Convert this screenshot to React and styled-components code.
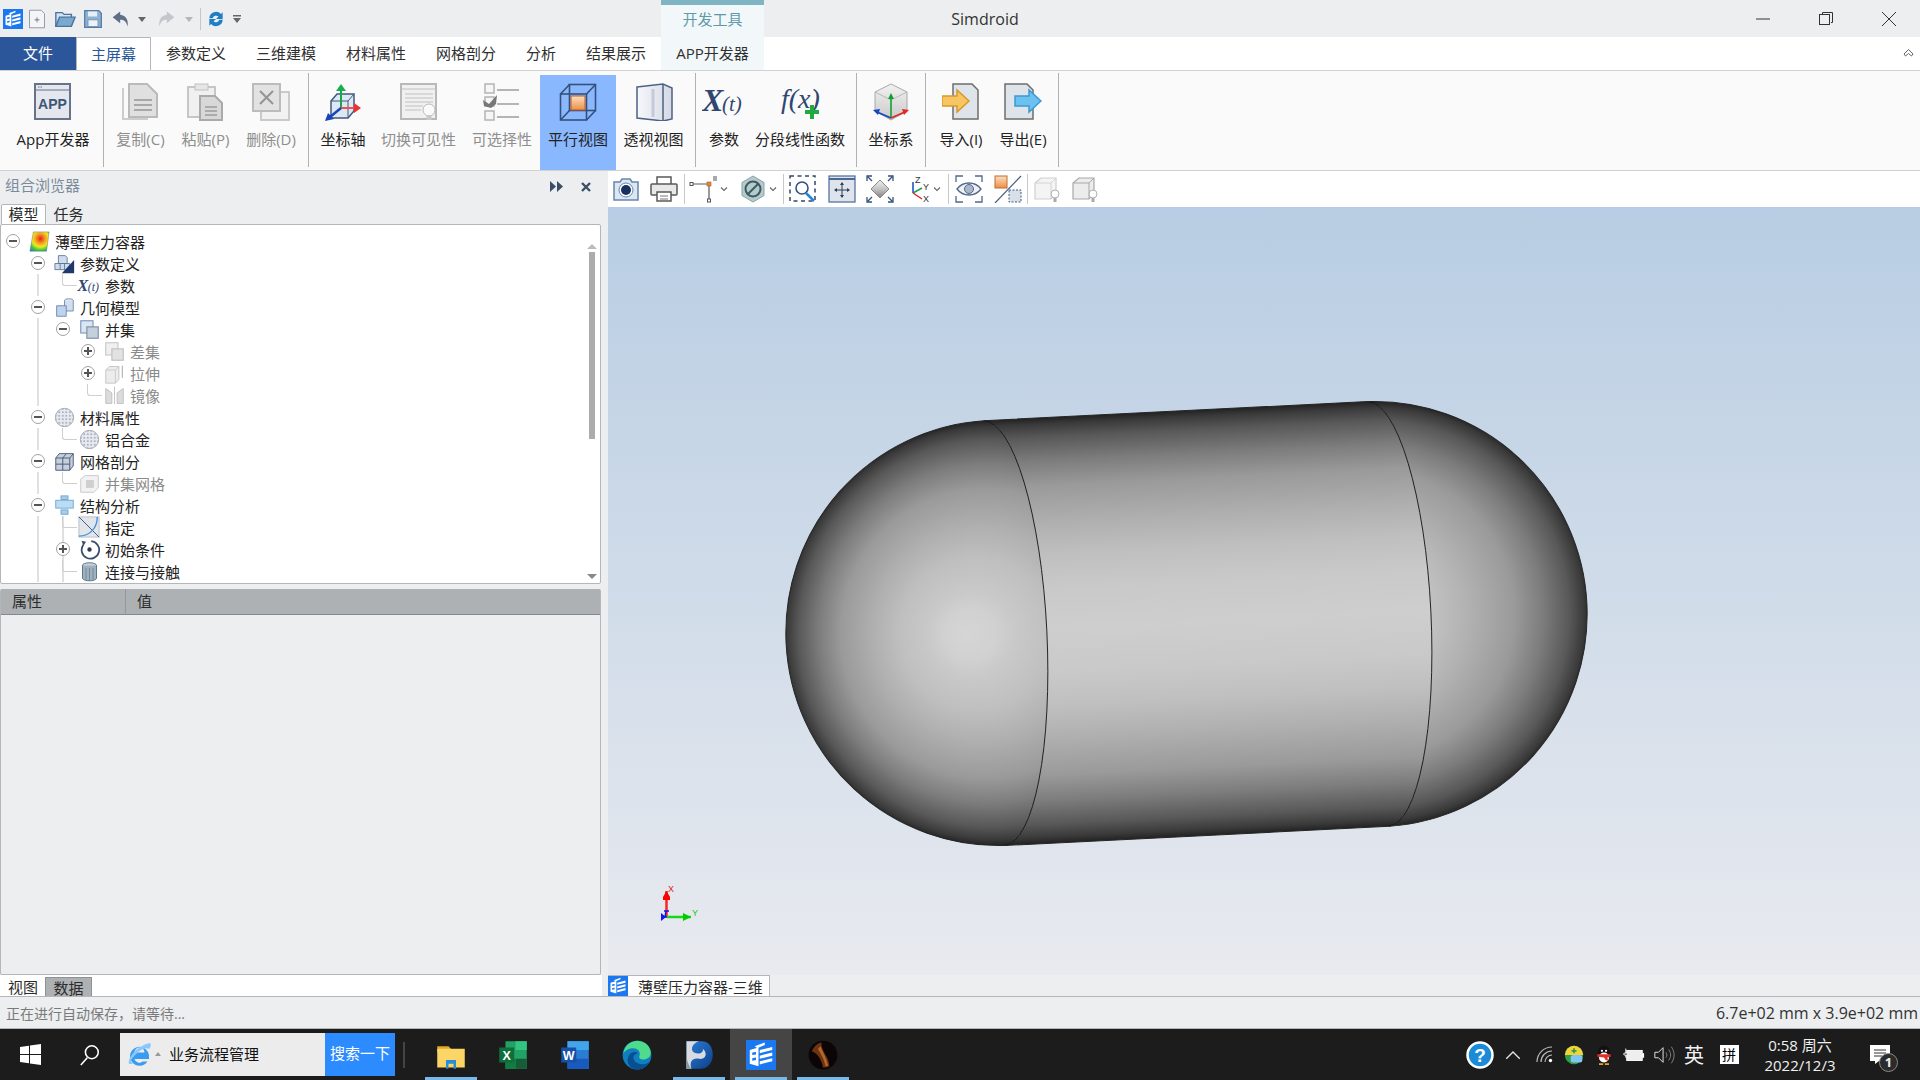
import React from 'react';
import styled, { createGlobalStyle } from 'styled-components';

const CHROME = '#eceef0';
const BORDER = '#b4b6b8';

const GlobalStyle = createGlobalStyle`
  html, body {
    margin: 0;
    padding: 0;
    background: ${CHROME};
    font-family: "Open Sans", "Noto Sans CJK SC", sans-serif;
  }
  svg { display: block; flex: none; }
`;

const Page = styled.div`
  width: 1920px;
  height: 1080px;
  display: flex;
  flex-direction: column;
  overflow: hidden;
  font-size: 15px;
  color: #2b2b2b;
`;

/* ---------- title bar ---------- */
const TitleBar = styled.div`
  height: 37px;
  flex: none;
  display: flex;
  background: ${CHROME};
`;
const QuickAccess = styled.div`
  width: 659px;
  padding-left: 2px;
  display: flex;
  align-items: center;
  height: 37px;
`;
const QuickButton = styled.div`
  width: ${p => p.$w}px;
  display: flex;
  justify-content: center;
  align-items: center;
`;
const QuickDivider = styled.div`
  width: 1px;
  height: 22px;
  background: #c4c6c8;
  margin: 0 5px 0 6px;
`;
const ContextTab = styled.div`
  width: 103px;
  border-top: 5px solid #7fb5c3;
  background: #f2f7fa;
  color: #5e9aa9;
  font-size: 15px;
  line-height: 29px;
  text-align: center;
`;
const AppTitle = styled.div`
  width: 442px;
  text-align: center;
  line-height: 38px;
  font-size: 16px;
  color: #333;
`;
const WindowButtons = styled.div`
  margin-left: auto;
  display: flex;
`;
const WindowButton = styled.div`
  width: 63px;
  height: 37px;
  display: flex;
  align-items: center;
  justify-content: center;
`;

/* ---------- ribbon ---------- */
const TabBar = styled.div`
  height: 33px;
  flex: none;
  display: flex;
  align-items: stretch;
  background: #fff;
`;
const RibbonTab = styled.div`
  padding: 0 15px;
  line-height: 33px;
  font-size: 15px;
  white-space: nowrap;
  color: ${p => (p.$file ? '#fff' : p.$active ? '#2b579a' : '#2f2f2f')};
  background: ${p => (p.$file ? '#2b579a' : p.$context ? '#f2f7fa' : '#fff')};
  width: ${p => (p.$w ? `${p.$w}px` : 'auto')};
  box-sizing: border-box;
  text-align: center;
  ${p => p.$active && `
    border: 1px solid ${BORDER};
    border-bottom: 0;
    line-height: 32px;
    padding: 0 14px;
  `}
`;
const CollapseButton = styled.div`
  margin-left: auto;
  padding-right: 5px;
  display: flex;
  align-items: center;
`;
const Ribbon = styled.div`
  height: 101px;
  flex: none;
  box-sizing: border-box;
  display: flex;
  padding-left: 7px;
  background: #fafafa;
  border-top: 1px solid #d2d2d2;
  border-bottom: 1px solid #d2d2d2;
`;
const RibbonButton = styled.div`
  width: ${p => p.$w}px;
  height: 95px;
  margin-top: 4px;
  display: flex;
  flex-direction: column;
  align-items: center;
  background: ${p => (p.$active ? '#8ab8ff' : 'transparent')};
`;
const RibbonIcon = styled.div`
  height: 40px;
  margin-top: 7px;
  display: flex;
  align-items: center;
  justify-content: center;
`;
const RibbonLabel = styled.div`
  margin-top: 6px;
  font-size: 15px;
  line-height: 22px;
  white-space: nowrap;
  color: ${p => (p.$off ? '#8e8e8e' : '#222')};
`;
const RibbonDivider = styled.div`
  width: 1px;
  height: 94px;
  margin: 2px 4px 0;
  background: #b2b2b2;
`;

/* ---------- work area ---------- */
const Work = styled.div`
  flex: 1;
  min-height: 0;
  display: flex;
`;
const LeftPanel = styled.div`
  width: 608px;
  flex: none;
  display: flex;
  flex-direction: column;
  background: ${CHROME};
`;
const PanelHeader = styled.div`
  height: 33px;
  flex: none;
  width: 601px;
  box-sizing: border-box;
  padding: 0 9px 7px 5px;
  display: flex;
  align-items: center;
  color: #7b8b9c;
  font-size: 15px;
`;
const PanelActions = styled.div`
  margin-left: auto;
  display: flex;
  align-items: center;
  gap: 17px;
  margin-top: 5px;
`;
const PanelTabs = styled.div`
  height: 20px;
  flex: none;
  display: flex;
  padding-left: 1px;
`;
const PanelTab = styled.div`
  width: 45px;
  box-sizing: border-box;
  line-height: 20px;
  text-align: center;
  font-size: 15px;
  ${p => p.$active && `
    background: #fff;
    border: 1px solid ${BORDER};
    border-bottom: 0;
    border-radius: 2px 2px 0 0;
    line-height: 19px;
  `}
`;
const TreeBox = styled.div`
  width: 601px;
  height: 360px;
  flex: none;
  box-sizing: border-box;
  display: flex;
  background: #fff;
  border: 1px solid ${BORDER};
  border-radius: 2px;
  overflow: hidden;
`;
const TreeList = styled.div`
  flex: 1;
  padding-top: 5px;
`;
const TreeRow = styled.div`
  position: relative;
  height: 22px;
  display: flex;
  align-items: center;
  padding-left: ${p => p.$depth * 25 + 5}px;
  font-size: 15px;
  color: ${p => (p.$off ? '#8a8a8a' : '#222')};
  white-space: nowrap;
`;
const Guide = styled.div`
  position: absolute;
  top: 0;
  bottom: 0;
  left: ${p => p.$x - 1}px;
  width: 2px;
  background: #e0e0e0;
`;
const ToggleSlot = styled.div`
  position: relative;
  width: 14px;
  height: 14px;
  margin-right: 10px;
  flex: none;
`;
const Toggle = styled.div`
  position: relative;
  box-sizing: border-box;
  width: 14px;
  height: 14px;
  border: 1px solid #a2a2a2;
  border-radius: 50%;
  background: #fff;
  &::before {
    content: '';
    position: absolute;
    left: 2px;
    right: 2px;
    top: 5px;
    height: 2px;
    background: #555;
  }
  &::after {
    content: '';
    display: ${p => (p.$plus ? 'block' : 'none')};
    position: absolute;
    top: 2px;
    bottom: 2px;
    left: 5px;
    width: 2px;
    background: #555;
  }
`;
const Elbow = styled.div`
  position: absolute;
  left: 6px;
  top: -4px;
  width: 14px;
  height: 11px;
  border-left: 1px solid #cfcfcf;
  border-bottom: 1px solid #cfcfcf;
  border-radius: 0 0 0 3px;
`;
const TreeIcon = styled.div`
  width: 18px;
  margin-right: 7px;
  flex: none;
  display: flex;
  justify-content: center;
  position: relative;
`;
const ScrollTrack = styled.div`
  width: 12px;
  margin-right: 2px;
  flex: none;
  display: flex;
  flex-direction: column;
  align-items: center;
  padding: 19px 0 4px;
  box-sizing: border-box;
`;
const ScrollThumb = styled.div`
  width: 6px;
  height: 187px;
  margin-top: 3px;
  background: #acacac;
`;
const ScrollArrow = styled.div`
  width: 0;
  height: 0;
  border-left: 5px solid transparent;
  border-right: 5px solid transparent;
  ${p => (p.$down
    ? 'border-top: 5px solid #888; margin-top: auto;'
    : 'border-bottom: 5px solid #bbb;')}
`;
const PropertyBox = styled.div`
  width: 601px;
  flex: 1;
  min-height: 0;
  margin-top: 5px;
  box-sizing: border-box;
  display: flex;
  flex-direction: column;
  border: 1px solid ${BORDER};
  border-top: 0;
  border-radius: 2px;
`;
const PropertyHead = styled.div`
  height: 25px;
  flex: none;
  display: flex;
  background: #adb1b4;
  border-bottom: 1px solid #85898c;
  font-size: 15px;
  line-height: 25px;
`;
const PropertyCell = styled.div`
  width: ${p => (p.$w ? `${p.$w}px` : 'auto')};
  box-sizing: border-box;
  padding-left: ${p => p.$pl}px;
  border-right: ${p => (p.$w ? '1px solid #94989b' : '0')};
`;
const BottomTabs = styled.div`
  height: 21px;
  width: 601px;
  flex: none;
  display: flex;
  background: #fff;
  padding-left: 1px;
`;
const BottomTab = styled.div`
  width: ${p => p.$w}px;
  box-sizing: border-box;
  margin-top: 2px;
  line-height: 20px;
  height: 19px;
  text-align: center;
  font-size: 15px;
  ${p => p.$active && `
    background: #adb1b4;
    border: 1px solid #8e9295;
    border-bottom: 0;
  `}
`;
const RightPanel = styled.div`
  flex: 1;
  min-width: 0;
  display: flex;
  flex-direction: column;
`;
const ViewToolbar = styled.div`
  height: 36px;
  flex: none;
  display: flex;
  align-items: center;
  background: #fff;
`;
const ToolButton = styled.div`
  width: ${p => p.$w}px;
  padding-left: ${p => p.$pl || 0}px;
  box-sizing: border-box;
  display: flex;
  align-items: center;
  gap: ${p => p.$gap || 0}px;
  justify-content: ${p => (p.$pl ? 'flex-start' : 'center')};
`;
const ToolDivider = styled.div`
  width: 1px;
  height: 30px;
  background: #c8c8c8;
`;
const Viewport = styled.div`
  flex: 1;
  min-height: 0;
  overflow: hidden;
  background: linear-gradient(#b8cde3, #e8eaef);
`;
const Scene = styled.svg`
  width: 1312px;
  height: 768px;
`;
const DocTabs = styled.div`
  height: 21px;
  flex: none;
  display: flex;
  background: ${CHROME};
`;
const DocTab = styled.div`
  width: 162px;
  box-sizing: border-box;
  display: flex;
  align-items: center;
  gap: 10px;
  background: #fff;
  border: 1px solid ${BORDER};
  border-left: 0;
  border-bottom: 0;
  font-size: 15px;
  white-space: nowrap;
`;

/* ---------- status + taskbar ---------- */
const StatusBar = styled.div`
  height: 33px;
  flex: none;
  box-sizing: border-box;
  display: flex;
  align-items: center;
  justify-content: space-between;
  padding: 0 2px 0 6px;
  background: ${CHROME};
  border-top: 1px solid ${BORDER};
  border-bottom: 1px solid ${BORDER};
`;
const StatusText = styled.div`
  font-size: 14px;
  color: #7a7a7a;
`;
const StatusSize = styled.div`
  font-size: 16px;
  color: #333;
`;
const TaskBar = styled.div`
  height: 51px;
  flex: none;
  display: flex;
  align-items: stretch;
  background: #1c1c1c;
`;
const TaskSlot = styled.div`
  width: 60px;
  display: flex;
  align-items: center;
  justify-content: center;
`;
const SearchBox = styled.div`
  width: 205px;
  height: 43px;
  margin-top: 4px;
  display: flex;
  align-items: center;
  background: #ececec;
  padding: 0 0 2px 8px;
  box-sizing: border-box;
  gap: 3px;
  color: #111;
  font-size: 15px;
`;
const SearchCaret = styled.div`
  width: 0;
  height: 0;
  border-left: 3px solid transparent;
  border-right: 3px solid transparent;
  border-bottom: 4px solid #999;
  margin-right: 5px;
`;
const SearchButton = styled.div`
  width: 70px;
  height: 43px;
  margin-top: 4px;
  background: #2b8bff;
  color: #fff;
  font-size: 15px;
  line-height: 41px;
  text-align: center;
`;
const TaskSeparator = styled.div`
  width: 2px;
  height: 26px;
  margin: 13px 15px 0 8px;
  background: #444;
`;
const TaskItem = styled.div`
  position: relative;
  width: 62px;
  display: flex;
  align-items: center;
  justify-content: center;
  background: ${p => (p.$active ? '#454545' : 'transparent')};
  &::after {
    content: '';
    display: ${p => (p.$open ? 'block' : 'none')};
    position: absolute;
    left: 5px;
    right: 5px;
    bottom: 0;
    height: 3px;
    background: #76b9ed;
  }
`;
const Tray = styled.div`
  margin-left: auto;
  padding-right: 12px;
  display: flex;
  align-items: stretch;
`;
const TrayItem = styled.div`
  position: relative;
  width: ${p => p.$w}px;
  display: flex;
  align-items: center;
  justify-content: center;
  color: #fff;
`;
const ImeLang = styled.div`
  font-size: 20px;
  color: #f2f2f2;
`;
const ImeMode = styled.div`
  width: 19px;
  height: 19px;
  background: #fff;
  color: #000;
  font-size: 14px;
  line-height: 19px;
  text-align: center;
`;
const Clock = styled.div`
  font-size: 15px;
  line-height: 20px;
  text-align: center;
  color: #f0f0f0;
`;
const NoticeBadge = styled.div`
  position: absolute;
  left: 27px;
  top: 24px;
  width: 19px;
  height: 19px;
  box-sizing: border-box;
  border: 1px solid #888;
  border-radius: 50%;
  background: #2b2b2b;
  font-size: 13px;
  font-weight: 700;
  line-height: 17px;
  text-align: center;
  color: #eee;
`;

/* ---------- icons ---------- */
const I = ({ s = 21, v = 24, children }) => (
  <svg width={s} height={s} viewBox={`0 0 ${v} ${v}`}>{children}</svg>
);

const Logo = ({ s = 20 }) => (
  <I s={s}>
    <rect width="24" height="24" fill="#1a78f0" />
    <path fill="#fff" d="M3 8l7-2v15l-7-2zM7 5l8-3v2L9 6.500zM11 8l10-2.500V8l-10 2.500zM11 12.500l10-2.500v2.500L11 15zM11 17l10-2.500V17l-10 2.500z" />
    <path fill="#1a78f0" d="M5 10l3-.5v2l-3 .5zM5 14.500l3-.5v2l-3 .5z" />
  </I>
);
const NewFile = () => (
  <I s={20}><path d="M3 1.500h14l4 4v17H3z" fill="#f4f5f8" stroke="#7f8ba0" /><path d="M9 13h6M12 10v6" stroke="#667" /></I>
);
const OpenFolder = () => (
  <I s={22}><path d="M2 20V5h7l2 2h8v3" fill="#d5e2ef" stroke="#48749c" strokeWidth="1.500" /><path d="M2 20l4-10h17l-4 10z" fill="#7aa9d0" stroke="#48749c" strokeWidth="1.500" /></I>
);
const SaveIcon = () => (
  <I s={20}><path d="M2 2h17l3 3v17H2z" fill="#8eb0d3" stroke="#527ca4" strokeWidth="1.500" /><rect x="6" y="3" width="11" height="6" fill="#e8eef5" /><rect x="6" y="13" width="12" height="8" fill="#eef2f6" stroke="#6f8fb0" /></I>
);
const Undo = ({ c = '#5f6f87', flip }) => (
  <I s={20}><path transform={flip ? 'matrix(-1 0 0 1 24 0)' : undefined} d="M11 3L2 10l9 7v-4c5 0 7 2 9 8 1-8-2-13-9-14z" fill={c} /></I>
);
const SmallDrop = ({ c = '#666' }) => <I s={8} v={8}><path d="M0 2h8L4 7z" fill={c} /></I>;
const MoreDrop = () => <I s={8} v={8}><path d="M0 0h8v1.500H0zM0 3h8L4 8z" fill="#666" /></I>;
const Refresh = () => (
  <I s={20}>
    <path d="M4 11a8 8 0 0 1 14-5l2-2v8h-8l3-3a4.500 4.500 0 0 0-7 2z" fill="#1f7fc4" />
    <path d="M20 13a8 8 0 0 1-14 5l-2 2v-8h8l-3 3a4.500 4.500 0 0 0 7-2z" fill="#1f7fc4" />
  </I>
);

const AppIcon = () => (
  <I s={38} v={38}>
    <rect x="1" y="1" width="35" height="35" fill="#e4e7ee" stroke="#67738a" strokeWidth="2" />
    <path d="M2 7h33" stroke="#67738a" />
    <path d="M4 4h5" stroke="#67738a" strokeDasharray="1.500 1" />
    <text x="18.500" y="26" fontFamily="Liberation Sans" fontWeight="700" fontSize="14" textAnchor="middle" fill="#3d5674">APP</text>
  </I>
);
const CopyIcon = () => (
  <I s={38} v={38}>
    <path d="M1 5v31h25" fill="none" stroke="#cdcdcd" strokeWidth="2" />
    <path d="M7 1h18l10 10v23H7z" fill="#e0e0e0" stroke="#bababa" strokeWidth="2" />
    <path d="M12 17h18M12 22h18M12 27h18" stroke="#a8a8a8" strokeWidth="2" />
  </I>
);
const PasteIcon = () => (
  <I s={38} v={38}>
    <rect x="1" y="4" width="27" height="30" fill="#f0f0f0" stroke="#c6c6c6" strokeWidth="2" />
    <rect x="8" y="1" width="13" height="6" fill="#e6e6e6" stroke="#c0c0c0" />
    <path d="M13 13h15l7 7v17H13z" fill="#d8d8d8" stroke="#aaa" strokeWidth="2" />
    <path d="M18 24h12M18 28h12M18 32h12" stroke="#9c9c9c" strokeWidth="1.500" />
  </I>
);
const DeleteIcon = () => (
  <I s={38} v={38}>
    <rect x="9" y="9" width="28" height="28" fill="#f2f2f2" stroke="#cacaca" strokeWidth="2" />
    <rect x="1" y="1" width="27" height="27" fill="#e2e2e2" stroke="#bcbcbc" strokeWidth="2" />
    <path d="M8 8l13 13M21 8L8 21" stroke="#949494" strokeWidth="2" />
  </I>
);
const AxisIcon = () => (
  <I s={38} v={38}>
    <path d="M7 18l6-7h17v17l-6 7H7z" fill="#dde8f5" stroke="#41597f" strokeWidth="1.500" />
    <path d="M7 18h17v17M24 18l6-7" fill="none" stroke="#41597f" />
    <path d="M17 25V6" stroke="#18a84a" strokeWidth="2" /><path d="M12 8l5-7 5 7z" fill="#14b04a" />
    <path d="M17 25h14" stroke="#f05050" strokeWidth="2" /><path d="M30 20l7 5-7 5z" fill="#ef3030" />
    <path d="M17 25L6 34" stroke="#1646b8" strokeWidth="2.500" /><path d="M1 38l3-8 6 6z" fill="#1544b6" />
  </I>
);
const VisibleIcon = () => (
  <I s={38} v={38}>
    <rect x="1" y="1" width="35" height="35" fill="#f0f0f0" stroke="#b8b8b8" strokeWidth="2" />
    <path d="M1 6h35M5 11h28M5 15h28M5 19h28M5 23h18M5 27h16" stroke="#c0c0c0" />
    <circle cx="29" cy="27" r="6" fill="#fafafa" stroke="#bbb" />
    <rect x="26.500" y="32" width="5" height="5" fill="#c8c8c8" />
  </I>
);
const SelectIcon = () => (
  <I s={38} v={38}>
    <g fill="#f6f6f6" stroke="#b4b4b4" strokeWidth="1.500">
      <rect x="2" y="1" width="9" height="9" /><rect x="2" y="14" width="9" height="9" /><rect x="2" y="28" width="9" height="9" />
    </g>
    <path d="M0 17l6 4 8-9-1 9-5 4-7-2z" fill="#777" />
    <path d="M14 7h22M14 21h22M14 34h22" stroke="#b4b4b4" strokeWidth="2" />
  </I>
);
const ParallelIcon = () => (
  <I s={38} v={38}>
    <g fill="none" stroke="#33507d" strokeWidth="1.600">
      <rect x="1.500" y="11" width="26" height="26" /><rect x="10.500" y="1.500" width="26" height="26" />
      <path d="M1.500 11l9-9.500M27.500 11l9-9.500M1.500 37l9-9.500M27.500 37l9-9.500" />
    </g>
    <defs><linearGradient id="orange" x1="0" y1="0" x2="0" y2="1"><stop offset="0" stopColor="#fbe0c2" /><stop offset="1" stopColor="#ec8f46" /></linearGradient></defs>
    <rect x="12" y="13" width="14" height="14" fill="url(#orange)" stroke="#bd5c24" />
  </I>
);
const PerspIcon = () => (
  <I s={38} v={38}>
    <defs><linearGradient id="glass" x1="0" y1="0" x2="1" y2="0"><stop offset="0" stopColor="#f6f7fa" /><stop offset="1" stopColor="#d5d9e4" /></linearGradient></defs>
    <path d="M2 4l26-3 9 4v31l-9 2-26-3z" fill="url(#glass)" stroke="#4d6283" strokeWidth="1.500" />
    <path d="M28 1v37" stroke="#4d6283" strokeWidth="1.500" />
    <path d="M18 6v28" stroke="#c3cbdb" strokeWidth="3" />
  </I>
);
const XtIcon = () => (
  <svg width="44" height="38" viewBox="0 0 44 38">
    <text x="0" y="28" fontFamily="Liberation Serif" fontStyle="italic" fontWeight="700" fontSize="32" fill="#2f4770">X</text>
    <text x="20" y="28" fontFamily="Liberation Serif" fontStyle="italic" fontSize="21" fill="#2f4770">(t)</text>
  </svg>
);
const FxIcon = () => (
  <svg width="44" height="38" viewBox="0 0 44 38">
    <text x="3" y="25" fontFamily="Liberation Serif" fontStyle="italic" fontSize="28" fill="#2f4770">f(x)</text>
    <path d="M32 22h4v5h5v4h-5v5h-4v-5h-5v-4h5z" fill="#22aa3c" />
  </svg>
);
const CoordIcon = () => (
  <I s={38} v={38}>
    <defs><linearGradient id="cubeGrey" x1="0" y1="0" x2="0" y2="1"><stop offset="0" stopColor="#f2f2f2" /><stop offset="1" stopColor="#c9c9c9" /></linearGradient></defs>
    <path d="M19 1l16 8v19l-16 9-16-9V9z" fill="url(#cubeGrey)" stroke="#a8a8a8" />
    <path d="M3 9l16 8 16-8" fill="none" stroke="#b8b8b8" />
    <path d="M19 34V13" stroke="#12a02f" strokeWidth="1.600" /><path d="M16 16l3-6 3 6z" fill="#12a02f" />
    <path d="M19 35L5 29" stroke="#1747c0" strokeWidth="1.800" /><path d="M1 27l7-1-2 6z" fill="#1747c0" />
    <path d="M19 35l14-6" stroke="#e02828" strokeWidth="1.800" /><path d="M37 27l-7-1 2 6z" fill="#e02828" />
  </I>
);
const ImportIcon = () => (
  <I s={38} v={38}>
    <path d="M11 1h19l6 6v29H11z" fill="#dfe3ea" stroke="#6d6d6d" strokeWidth="1.500" />
    <path d="M0 13h15V7l12 11-12 11v-6H0z" fill="#f7c561" stroke="#d89a2b" strokeWidth="1.500" />
  </I>
);
const ExportIcon = () => (
  <I s={38} v={38}>
    <path d="M1 1h22l6 6v29H1z" fill="#dfe3ea" stroke="#6d6d6d" strokeWidth="1.500" />
    <path d="M11 13h14V7l12 11-12 11v-6H11z" fill="#6cc1ee" stroke="#3a9ad3" strokeWidth="1.500" />
  </I>
);

const Camera = () => (
  <I s={28} v={28}>
    <path d="M2 7h6l2-3h8l2 3h6v18H2z" fill="#dce7f3" stroke="#6786ab" strokeWidth="1.500" />
    <circle cx="14" cy="15" r="7" fill="#fff" stroke="#6786ab" /><circle cx="14" cy="15" r="5" fill="#17305f" />
  </I>
);
const Printer = () => (
  <I s={28} v={28}>
    <path d="M7 9V2h14v7" fill="#fff" stroke="#585858" strokeWidth="1.500" />
    <rect x="1" y="9" width="26" height="11" rx="1" fill="#e8e8e8" stroke="#585858" strokeWidth="1.500" />
    <rect x="7" y="17" width="14" height="9" fill="#fff" stroke="#585858" strokeWidth="1.500" />
    <path d="M10 21h8M10 24h8" stroke="#777" />
  </I>
);
const ClipTool = () => (
  <I s={28} v={28}>
    <path d="M3 9h17V25" fill="none" stroke="#525a68" strokeWidth="1.200" />
    <rect x="1" y="7.500" width="3" height="3" fill="#fff" stroke="#555" />
    <rect x="18.500" y="24" width="3" height="3" fill="#fff" stroke="#555" />
    <rect x="18" y="7" width="4" height="4" fill="#e08a3c" stroke="#a85c20" strokeWidth=".6" />
    <path d="M25 1v5M27 1v5" stroke="#555" />
  </I>
);
const HexBan = () => (
  <I s={28} v={28}>
    <path d="M14 1l11 6.500v13L14 27 3 20.500v-13z" fill="#b5cbcb" stroke="#86a3a3" />
    <circle cx="14" cy="14" r="7.500" fill="none" stroke="#3d5a63" strokeWidth="2" />
    <path d="M9 19L19 9" stroke="#3d5a63" strokeWidth="2" />
  </I>
);
const ZoomBox = () => (
  <I s={28} v={28}>
    <rect x="1" y="1" width="25" height="25" fill="none" stroke="#31476a" strokeWidth="1.500" strokeDasharray="4 3.500" />
    <circle cx="13" cy="13" r="6" fill="#fff" stroke="#31527f" strokeWidth="1.600" />
    <path d="M17 18l8 8" stroke="#2a84d2" strokeWidth="2.500" />
  </I>
);
const FitView = () => (
  <I s={28} v={28}>
    <rect x="1" y="1" width="26" height="26" fill="#dfe3ec" stroke="#486a96" strokeWidth="1.200" />
    <path d="M1 4h26" stroke="#486a96" strokeWidth="2" />
    <path d="M14 8v14M7 15h14" stroke="#2c3e58" />
    <path d="M14 7l-2 3h4zM14 23l-2-3h4zM6 15l3-2v4zM22 15l-3-2v4z" fill="#2c3e58" />
  </I>
);
const DiamondFit = () => (
  <I s={28} v={28}>
    <defs><linearGradient id="diamond" x1="0" y1="0" x2="0" y2="1"><stop offset="0" stopColor="#f0f0f0" /><stop offset=".5" stopColor="#c4c4c4" /><stop offset="1" stopColor="#808080" /></linearGradient></defs>
    <path d="M14 5l9 9-9 9-9-9z" fill="url(#diamond)" stroke="#8a8a8a" />
    <path d="M1 6V1h5M27 6V1h-5M1 22v5h5M27 22v5h-5M2 2l4 4M26 2l-4 4M2 26l4-4M26 26l-4-4" fill="none" stroke="#33507d" strokeWidth="1.300" />
  </I>
);
const TriadTool = () => (
  <I s={26} v={26}>
    <path d="M8 17V6" stroke="#1747c0" strokeWidth="1.500" />
    <path d="M8 17l9-5" stroke="#18a050" strokeWidth="1.500" />
    <path d="M8 17l9 6" stroke="#e02828" strokeWidth="1.500" />
    <g fontFamily="Liberation Sans" fontSize="9" fill="#333">
      <text x="10" y="7">Z</text><text x="18" y="14">Y</text><text x="18" y="26">X</text>
    </g>
  </I>
);
const EyeTool = () => (
  <I s={28} v={28}>
    <path d="M1 7V1h7M27 7V1h-7M1 21v6h7M27 21v6h-7" fill="none" stroke="#52688a" strokeWidth="1.300" />
    <path d="M2 14c6-8 18-8 24 0-6 8-18 8-24 0z" fill="#eef1f6" stroke="#52688a" strokeWidth="1.300" />
    <circle cx="14" cy="14" r="4.500" fill="#a9b7ca" stroke="#52688a" />
  </I>
);
const SectionTool = () => (
  <I s={28} v={28}>
    <rect x="1" y="1" width="12" height="12" fill="url(#orange)" stroke="#c06a30" />
    <rect x="15" y="15" width="12" height="12" fill="#d8dfe9" stroke="#3d5a80" strokeDasharray="2 1.500" />
    <path d="M1 28L27 1" stroke="#4a5f80" strokeWidth="1.200" />
  </I>
);
const BoxBulb = ({ dark }) => (
  <I s={28} v={28}>
    <path d="M2 8l6-5h15v16l-5 5H2z" fill={dark ? '#ececec' : '#f4f4f4'} stroke={dark ? '#a8a8a8' : '#cfcfcf'} strokeWidth="1.200" />
    <path d="M2 8h16v16M18 8l5-5" fill="none" stroke={dark ? '#a8a8a8' : '#d4d4d4'} />
    <circle cx="22" cy="19" r="4" fill="#fff" stroke="#b0b0b0" />
    <rect x="20.500" y="23" width="3" height="4" fill="#aaa" />
  </I>
);

const HeatMap = () => (
  <I>
    <defs>
      <radialGradient id="heat" cx=".55" cy=".35" r=".85">
        <stop offset="0" stopColor="#e8201c" /><stop offset=".3" stopColor="#f5a020" />
        <stop offset=".5" stopColor="#f0e820" /><stop offset=".72" stopColor="#3cc840" /><stop offset="1" stopColor="#2a6fe0" />
      </radialGradient>
    </defs>
    <path d="M5 1h18l-3 22H1z" fill="url(#heat)" stroke="#567" strokeWidth=".5" />
  </I>
);
const ParamIcon = () => (
  <I>
    <path d="M5 3h8l2 2v7H5zM1 12h17v7H1z" fill="#cfdcec" stroke="#5d7698" />
    <path d="M7 12v7M12 12v7" stroke="#5d7698" />
    <path d="M23 8v15H9z" fill="#1f3a6a" />
  </I>
);
const TreeXt = () => (
  <svg width="24" height="19" viewBox="0 0 20 16">
    <text x="0" y="13" fontFamily="Liberation Serif" fontStyle="italic" fontWeight="700" fontSize="14" fill="#2f4770">X</text>
    <text x="9" y="13" fontFamily="Liberation Serif" fontStyle="italic" fontSize="10" fill="#2f4770">(t)</text>
  </svg>
);
const GeomIcon = () => (
  <I>
    <ellipse cx="17" cy="4" rx="5" ry="2" fill="#e8eef6" stroke="#6a85a8" />
    <path d="M12 4v12h10V4" fill="#d2deed" stroke="#6a85a8" />
    <path d="M3 10h11v12H3z" fill="#bdd3ee" stroke="#6a85a8" />
  </I>
);
const UnionIcon = ({ off }) => (
  <I>
    <rect x="2" y="2" width="14" height="14" fill={off ? '#f0f0f0' : '#dbe6f3'} stroke={off ? '#c8c8c8' : '#7d97ba'} strokeWidth="1.300" />
    <rect x="9" y="9" width="13" height="13" fill={off ? '#e2e2e2' : '#c6d0dc'} stroke={off ? '#c0c0c0' : '#7d8ea6'} strokeWidth="1.300" />
  </I>
);
const ExtrudeIcon = () => (
  <I>
    <path d="M2 8l4-4h11v15l-4 4H2z" fill="#ececec" stroke="#c0c0c0" />
    <path d="M2 8h11v15M13 8l4-4" fill="none" stroke="#c8c8c8" />
    <path d="M21 3v14" stroke="#bbb" strokeWidth="1.500" />
  </I>
);
const MirrorIcon = () => (
  <I>
    <path d="M2 4l7 5v12H2zM22 4l-7 5v12h7z" fill="#dcdcdc" stroke="#bcbcbc" />
    <path d="M12 2v20" stroke="#bbb" />
  </I>
);
const SphereIcon = () => (
  <I>
    <defs><pattern id="dots" width="4" height="4" patternUnits="userSpaceOnUse"><rect width="4" height="4" fill="#e7e9ee" /><circle cx="2" cy="2" r="1.100" fill="#9ba5b6" /></pattern></defs>
    <circle cx="12" cy="12" r="10.500" fill="url(#dots)" stroke="#9aa3b2" />
  </I>
);
const MeshIcon = () => (
  <I>
    <path d="M2 8l4-5h16v14l-4 5H2z" fill="#c6cfdc" stroke="#3f5272" />
    <path d="M2 8h16v14M18 8l4-5M2 15h16M10 8v14M14 3l-4 5" fill="none" stroke="#3f5272" />
  </I>
);
const MeshUnionIcon = () => (
  <I>
    <path d="M2 7l5-4h15v14l-5 5H2z" fill="#f2f2f2" stroke="#c4c4c4" />
    <rect x="8" y="8" width="9" height="9" fill="#cfcfcf" />
  </I>
);
const AnalysisIcon = () => (
  <I>
    <rect x="8" y="1" width="8" height="4" fill="#a8cdea" stroke="#6aa3d1" />
    <rect x="2" y="6" width="20" height="9" fill="#bcdcf3" stroke="#6aa3d1" />
    <rect x="8" y="17" width="8" height="5" fill="#a8cdea" stroke="#6aa3d1" />
  </I>
);
const AssignIcon = () => (
  <I s={22}>
    <rect x="1" y="1" width="22" height="22" fill="#e2e5ec" stroke="#b4bccb" />
    <path d="M1 1l22 22" stroke="#39506f" strokeWidth="1" />
    <path d="M21 1c0 12-8 21-20 21" fill="none" stroke="#3f8ed6" strokeWidth="1.400" />
  </I>
);
const InitialIcon = () => (
  <I>
    <path d="M14 2.500a10 10 0 1 1-9 4" fill="none" stroke="#3a4d6c" strokeWidth="2" />
    <path d="M3 2l5 1-3 5z" fill="#3a4d6c" />
    <circle cx="12" cy="12" r="2.500" fill="#2a3b58" />
  </I>
);
const ContactIcon = () => (
  <I>
    <ellipse cx="12" cy="5" rx="8" ry="3" fill="#c8d2d9" stroke="#50687c" />
    <path d="M4 5v15c2 3.500 14 3.500 16 0V5" fill="#9fb1be" stroke="#50687c" />
    <path d="M8 8v13M12 8v14M16 8v13" stroke="#6d8294" />
  </I>
);

const ChevronSmall = () => (
  <I s={8} v={8}><path d="M1 2.500l3 3 3-3" fill="none" stroke="#666" strokeWidth="1.100" /></I>
);

const WinLogo = () => (
  <I s={21} v={21}><path fill="#fff" d="M0 3l9-1.300V10H0zM10 1.500L21 0v10H10zM0 11h9v8.300L0 18zM10 11h11v10l-11-1.500z" /></I>
);
const SearchGlass = () => (
  <I s={22}><circle cx="14" cy="9" r="7" fill="none" stroke="#fff" strokeWidth="1.700" /><path d="M9 15l-7 8" stroke="#fff" strokeWidth="1.700" /></I>
);
const IeIcon = () => (
  <I s={24}>
    <path d="M21 14a9.500 9.500 0 1 0-1.500 5.500h-5a5 5 0 0 1-8-2.500H21zM6.500 10.500a5 5 0 0 1 10 0z" fill="#3a9cf0" fillRule="evenodd" />
    <path d="M1 22C-1 16 10 3 22 1c2 3-1 6-1 6-3-3-12 2-18 11 0 2 1 4 3 4z" fill="#8ac8fa" />
  </I>
);
const FolderIcon = () => (
  <I s={30}>
    <path d="M1 5h9l2 2v3H1z" fill="#e5a823" />
    <rect x="1" y="7" width="22" height="15" fill="#fbd565" />
    <path d="M8 23v-7h8v7h-2v-4h-4v4z" fill="#2a8dd8" />
  </I>
);
const ExcelIcon = () => (
  <I s={30}>
    <rect x="6" y="1" width="17" height="22" fill="#21a366" />
    <rect x="14" y="1" width="9" height="7" fill="#33c481" />
    <rect x="14" y="15" width="9" height="8" fill="#185c37" />
    <rect x="6" y="15" width="8" height="8" fill="#107c41" />
    <rect x="1" y="6" width="12" height="12" fill="#0f6f3b" />
    <text x="7" y="16" fontFamily="Liberation Sans" fontWeight="700" fontSize="10" fill="#fff" textAnchor="middle">X</text>
  </I>
);
const WordIcon = () => (
  <I s={30}>
    <rect x="6" y="1" width="17" height="22" fill="#2b7cd3" />
    <rect x="6" y="1" width="17" height="7" fill="#41a5ee" />
    <rect x="6" y="15" width="17" height="8" fill="#185abd" />
    <rect x="1" y="6" width="12" height="12" fill="#1650a8" />
    <text x="7" y="16" fontFamily="Liberation Sans" fontWeight="700" fontSize="10" fill="#fff" textAnchor="middle">W</text>
  </I>
);
const EdgeIcon = () => (
  <I s={30}>
    <circle cx="12" cy="12" r="11.500" fill="#0f7fc0" />
    <path d="M1 11C2 3 9 .500 12 .500c6 0 11 4 11 10 0 3-3 5-6 5-2 0-4-1-3-3 1-3-1-6-5-6-4 0-7 2-8 4.500z" fill="#4fdb8c" />
    <path d="M12 23.500c-5 0-9-5-7-10 1-3 5-5 8-3-3 0-5 3-3 6 2 3 8 4 12 1-2 4-6 6-10 6z" fill="#0a4e92" />
  </I>
);
const SwirlIcon = () => (
  <I s={30}>
    <defs><linearGradient id="swirlBlue" x1="0" y1="0" x2="1" y2="1"><stop offset="0" stopColor="#2a7fd8" /><stop offset="1" stopColor="#0e3f8a" /></linearGradient></defs>
    <path d="M2 1h12c6 0 9 5 9 11 0 6-4 11-10 11H2z" fill="url(#swirlBlue)" />
    <path d="M2 1h10C6 3 5 8 8 10c4 2 8 0 7-3 4 3 3 9-3 8-5-1-8 2-6 8H2z" fill="#d8dce2" />
    <path d="M2 14c1 4 2 7 4 9H2z" fill="#8f949c" />
  </I>
);
const DarkApp = () => (
  <I s={30}>
    <circle cx="12" cy="12" r="11.500" fill="#0b0605" />
    <path d="M3 9c2-4 5-7 8-7-1 3 1 6 3 10 2 3 3 6 3 9-2 1-3 1-5 1-1-6-4-11-9-13z" fill="#6f3215" />
    <path d="M8 7c2 4 5 8 6 14l2-.5C15 15 12 10 10 5z" fill="#b06a2a" />
  </I>
);
const HelpIcon = () => (
  <svg width="28" height="28" viewBox="0 0 28 28">
    <circle cx="14" cy="14" r="12.500" fill="#1b8bd8" stroke="#fff" strokeWidth="2.500" />
    <text x="14" y="21" fontFamily="Liberation Sans" fontWeight="700" fontSize="19" textAnchor="middle" fill="#fff">?</text>
  </svg>
);
const TrayUp = () => <I s={18}><path d="M3 17l9-9 9 9" fill="none" stroke="#e6e6e6" strokeWidth="1.800" /></I>;
const WifiIcon = () => (
  <I s={17} v={17}>
    <path d="M1 16A15 15 0 0 1 16 1M5 16A11 11 0 0 1 16 5M9 16a7 7 0 0 1 7-7" fill="none" stroke="#bbb" strokeWidth="1.200" />
    <circle cx="14.500" cy="14.500" r="1.700" fill="#fff" />
  </I>
);
const GameIcon = () => (
  <I s={20}>
    <circle cx="12" cy="12" r="11" fill="#2f9e44" /><path d="M1 12A11 11 0 0 1 23 12z" fill="#f2d33a" />
    <path d="M12 4v6M9 7h6" stroke="#2f9e44" strokeWidth="2" />
    <rect x="8" y="12" width="14" height="9" rx="3" fill="#7fc6f5" />
  </I>
);
const QqIcon = () => (
  <I s={20}>
    <ellipse cx="12" cy="10" rx="7.500" ry="9" fill="#111" />
    <ellipse cx="12" cy="15" rx="6" ry="6" fill="#fff" />
    <path d="M4 11h16v3l-4 1 1 4-3-1-2-3-8-1z" fill="#e0302a" />
    <circle cx="9.500" cy="7" r="1.300" fill="#fff" /><circle cx="14.500" cy="7" r="1.300" fill="#fff" />
    <path d="M6 23h5M13 23h5" stroke="#f0a020" strokeWidth="2" />
  </I>
);
const BatteryIcon = () => (
  <I s={22}>
    <rect x="4" y="7" width="17" height="11" fill="#eee" stroke="#fff" />
    <rect x="21" y="10" width="2" height="5" fill="#fff" />
    <path d="M3 5v5M1 10h4v2H1zM3 12v3" stroke="#fff" />
  </I>
);
const VolumeIcon = () => (
  <I s={22}>
    <path d="M2 9h4l5-5v16l-5-5H2z" fill="none" stroke="#eee" />
    <path d="M14 9c1.500 2 1.500 4 0 6M17 6c3 4 3 8 0 12M20 3c4 6 4 12 0 18" fill="none" stroke="#888" />
  </I>
);
const NoticeIcon = () => (
  <I s={21} v={21}>
    <path d="M0 1h20v16H9l-4 3v-3H0z" fill="#fff" />
    <path d="M4 6h12M4 9h12M4 12h8" stroke="#333" />
  </I>
);

/* ---------- data ---------- */
const ribbonGroups = [
  [{ w: 92, icon: <AppIcon />, label: 'App开发器' }],
  [
    { w: 65, icon: <CopyIcon />, label: '复制(C)', off: true },
    { w: 65, icon: <PasteIcon />, label: '粘贴(P)', off: true },
    { w: 66, icon: <DeleteIcon />, label: '删除(D)', off: true },
  ],
  [
    { w: 60, icon: <AxisIcon />, label: '坐标轴' },
    { w: 91, icon: <VisibleIcon />, label: '切换可见性', off: true },
    { w: 76, icon: <SelectIcon />, label: '可选择性', off: true },
    { w: 76, icon: <ParallelIcon />, label: '平行视图', active: true },
    { w: 75, icon: <PerspIcon />, label: '透视视图' },
  ],
  [
    { w: 48, icon: <XtIcon />, label: '参数' },
    { w: 104, icon: <FxIcon />, label: '分段线性函数' },
  ],
  [{ w: 60, icon: <CoordIcon />, label: '坐标系' }],
  [
    { w: 62, icon: <ImportIcon />, label: '导入(I)' },
    { w: 62, icon: <ExportIcon />, label: '导出(E)' },
  ],
];

const tabs = ['参数定义', '三维建模', '材料属性', '网格剖分', '分析', '结果展示'];

const treeRows = [
  { d: 0, t: 'minus', icon: <HeatMap />, label: '薄壁压力容器' },
  { d: 1, t: 'minus', icon: <ParamIcon />, label: '参数定义' },
  { d: 2, t: 'elbow', icon: <TreeXt />, label: '参数', guides: [38] },
  { d: 1, t: 'minus', icon: <GeomIcon />, label: '几何模型' },
  { d: 2, t: 'minus', icon: <UnionIcon />, label: '并集', guides: [38] },
  { d: 3, t: 'plus', icon: <UnionIcon off />, label: '差集', off: true, guides: [38] },
  { d: 3, t: 'plus', icon: <ExtrudeIcon />, label: '拉伸', off: true, guides: [38] },
  { d: 3, t: 'elbow', icon: <MirrorIcon />, label: '镜像', off: true, guides: [38] },
  { d: 1, t: 'minus', icon: <SphereIcon />, label: '材料属性' },
  { d: 2, t: 'elbow', icon: <SphereIcon />, label: '铝合金', guides: [38] },
  { d: 1, t: 'minus', icon: <MeshIcon />, label: '网格剖分' },
  { d: 2, t: 'elbow', icon: <MeshUnionIcon />, label: '并集网格', off: true, guides: [38] },
  { d: 1, t: 'minus', icon: <AnalysisIcon />, label: '结构分析' },
  { d: 2, t: 'elbow', icon: <AssignIcon />, label: '指定', guides: [38, 63] },
  { d: 2, t: 'plus', icon: <InitialIcon />, label: '初始条件', guides: [38, 63] },
  { d: 2, t: 'elbow', icon: <ContactIcon />, label: '连接与接触', guides: [38, 63] },
];

const TL = '985.5 421.8';
const TR = '1366.5 402.8';
const BL = '1006.5 843.2';
const BR = '1387.5 824.2';
const SEAM = 'A53 211 -2.85 0';
const shade = [
  [0, '#cecece'], [0.2, '#c9c9c9'], [0.36, '#bfbfbf'], [0.5, '#b0b0b0'], [0.68, '#9a9a9a'],
  [0.8, '#7c7c7c'], [0.91, '#585858'], [0.97, '#3a3a3a'], [1, '#222222'],
];
const stops = shade.map(([o, c]) => <stop key={o} offset={o} stopColor={c} />);
const linearStops = [...shade].reverse().map(([o, c]) => <stop key={`a${o}`} offset={(1 - o) / 2} stopColor={c} />)
  .concat(shade.slice(1).map(([o, c]) => <stop key={`b${o}`} offset={(1 + o) / 2} stopColor={c} />));

const Capsule = () => (
  <Scene viewBox="608 207 1312 768">
    <defs>
      <linearGradient id="barrel" gradientUnits="userSpaceOnUse" x1="1176" y1="412.300" x2="1197" y2="833.700">{linearStops}</linearGradient>
      <radialGradient id="capLeft" gradientUnits="userSpaceOnUse" cx="996" cy="632.500" r="211" fx="968" fy="634">
        <stop offset="0" stopColor="#d5d5d5" /><stop offset=".12" stopColor="#d1d1d1" />{stops.slice(1)}
      </radialGradient>
      <radialGradient id="capRight" gradientUnits="userSpaceOnUse" cx="1377" cy="613.500" r="211" fx="1350" fy="615">
        {stops}
      </radialGradient>
    </defs>
    <g transform="translate(1186.5 623.5) scale(1.008) translate(-1186.5 -623)">
      <path d={`M${TL} A211 211 0 0 0 ${BL} ${SEAM} 0 ${TL} Z`} fill="url(#capLeft)" />
      <path d={`M${TR} A211 211 0 0 1 ${BR} ${SEAM} 0 ${TR} Z`} fill="url(#capRight)" />
      <path d={`M${TL} L${TR} ${SEAM} 1 ${BR} L${BL} ${SEAM} 0 ${TL} Z`} fill="url(#barrel)" />
      <path d={`M${TL} ${SEAM} 1 ${BL}M${TR} ${SEAM} 1 ${BR}`} fill="none" stroke="#111" strokeWidth=".9" />
      <path d={`M${TL} L${TR} A211 211 0 0 1 ${BR} L${BL} A211 211 0 0 1 ${TL} Z`} fill="none" stroke="#262626" strokeWidth="1" />
    </g>

    <path d="M666.500 917V891" stroke="#f22" strokeWidth="2.500" />
    <path d="M663 900h7v-3l-3.500-6-3.500 6z" fill="#f00" />
    <path d="M667 917h24" stroke="#16d816" strokeWidth="2.500" />
    <path d="M683 913l8 4-8 4z" fill="#0c0" />
    <path d="M667 917h-5M666 911l-1 6M664 911h5" stroke="#1414ee" strokeWidth="1.500" />
    <path d="M661 913l5 4-5 4z" fill="#1414ee" />
    <text x="668" y="892" fontFamily="Liberation Sans" fontSize="9" fill="#e01818">X</text>
    <text x="692" y="916" fontFamily="Liberation Sans" fontSize="9" fill="#14c814">Y</text>
  </Scene>
);

const App = () => (
  <Page>
    <GlobalStyle />
    <TitleBar>
      <QuickAccess>
        <QuickButton $w={22}><Logo /></QuickButton>
        <QuickButton $w={26}><NewFile /></QuickButton>
        <QuickButton $w={30}><OpenFolder /></QuickButton>
        <QuickButton $w={26}><SaveIcon /></QuickButton>
        <QuickButton $w={30}><Undo /></QuickButton>
        <QuickButton $w={12}><SmallDrop /></QuickButton>
        <QuickButton $w={36}><Undo c="#c3c7cd" flip /></QuickButton>
        <QuickButton $w={10}><SmallDrop c="#b6b6b6" /></QuickButton>
        <QuickDivider />
        <QuickButton $w={20}><Refresh /></QuickButton>
        <QuickButton $w={22}><MoreDrop /></QuickButton>
      </QuickAccess>
      <ContextTab>开发工具</ContextTab>
      <AppTitle>Simdroid</AppTitle>
      <WindowButtons>
        <WindowButton><I s={16} v={16}><path d="M1 8h14" stroke="#333" /></I></WindowButton>
        <WindowButton><I s={16} v={16}><path d="M4.500 3V1.500h10v10H13" fill="none" stroke="#333" /><rect x="1.500" y="3.500" width="10" height="10" fill="none" stroke="#333" /></I></WindowButton>
        <WindowButton><I s={16} v={16}><path d="M1 1l14 14M15 1L1 15" stroke="#333" /></I></WindowButton>
      </WindowButtons>
    </TitleBar>

    <TabBar>
      <RibbonTab $file $w={76}>文件</RibbonTab>
      <RibbonTab $active>主屏幕</RibbonTab>
      {tabs.map(t => <RibbonTab key={t}>{t}</RibbonTab>)}
      <RibbonTab $context $w={103}>APP开发器</RibbonTab>
      <CollapseButton>
        <I s={13} v={13}><path d="M2 7l4.500-4.500L11 7l-1.500 2-3-2.500L3.500 9z" fill="none" stroke="#666" /></I>
      </CollapseButton>
    </TabBar>

    <Ribbon>
      {ribbonGroups.map((group, i) => (
        <React.Fragment key={i}>
          {group.map(b => (
            <RibbonButton key={b.label} $w={b.w} $active={b.active}>
              <RibbonIcon>{b.icon}</RibbonIcon>
              <RibbonLabel $off={b.off}>{b.label}</RibbonLabel>
            </RibbonButton>
          ))}
          <RibbonDivider />
        </React.Fragment>
      ))}
    </Ribbon>

    <Work>
      <LeftPanel>
        <PanelHeader>
          组合浏览器
          <PanelActions>
            <I s={13} v={13}><path d="M0 1l6 5.500L0 12zM7 1l6 5.500L7 12z" fill="#3d4f66" /></I>
            <I s={12} v={12}><path d="M2 2l8 8M10 2l-8 8" stroke="#3d4f66" strokeWidth="2.400" /></I>
          </PanelActions>
        </PanelHeader>
        <PanelTabs>
          <PanelTab $active>模型</PanelTab>
          <PanelTab>任务</PanelTab>
        </PanelTabs>
        <TreeBox>
          <TreeList>
            {treeRows.map(r => (
              <TreeRow key={r.label} $depth={r.d} $off={r.off}>
                {(r.guides || []).map(x => <Guide key={x} $x={x - 1} />)}
                <ToggleSlot>
                  {r.t === 'elbow' ? <Elbow /> : <Toggle $plus={r.t === 'plus'} />}
                </ToggleSlot>
                <TreeIcon>{r.icon}</TreeIcon>
                {r.label}
              </TreeRow>
            ))}
          </TreeList>
          <ScrollTrack>
            <ScrollArrow />
            <ScrollThumb />
            <ScrollArrow $down />
          </ScrollTrack>
        </TreeBox>
        <PropertyBox>
          <PropertyHead>
            <PropertyCell $w={125} $pl={11}>属性</PropertyCell>
            <PropertyCell $pl={11}>值</PropertyCell>
          </PropertyHead>
        </PropertyBox>
        <BottomTabs>
          <BottomTab $w={44}>视图</BottomTab>
          <BottomTab $w={47} $active>数据</BottomTab>
        </BottomTabs>
      </LeftPanel>

      <RightPanel>
        <ViewToolbar>
          <ToolButton $w={36}><Camera /></ToolButton>
          <ToolButton $w={40}><Printer /></ToolButton>
          <ToolDivider />
          <ToolButton $w={48} $pl={4} $gap={3}><ClipTool /><ChevronSmall /></ToolButton>
          <ToolButton $w={50} $pl={6} $gap={2}><HexBan /><ChevronSmall /></ToolButton>
          <ToolDivider />
          <ToolButton $w={38}><ZoomBox /></ToolButton>
          <ToolButton $w={39}><FitView /></ToolButton>
          <ToolButton $w={38}><DiamondFit /></ToolButton>
          <ToolButton $w={49} $pl={6} $gap={2}><TriadTool /><ChevronSmall /></ToolButton>
          <ToolDivider />
          <ToolButton $w={40}><EyeTool /></ToolButton>
          <ToolButton $w={38}><SectionTool /></ToolButton>
          <ToolDivider />
          <ToolButton $w={38}><BoxBulb /></ToolButton>
          <ToolButton $w={38}><BoxBulb dark /></ToolButton>
        </ViewToolbar>
        <Viewport><Capsule /></Viewport>
        <DocTabs>
          <DocTab><Logo s={20} />薄壁压力容器-三维</DocTab>
        </DocTabs>
      </RightPanel>
    </Work>

    <StatusBar>
      <StatusText>正在进行自动保存，请等待...</StatusText>
      <StatusSize>6.7e+02 mm x 3.9e+02 mm</StatusSize>
    </StatusBar>

    <TaskBar>
      <TaskSlot><WinLogo /></TaskSlot>
      <TaskSlot><SearchGlass /></TaskSlot>
      <SearchBox><IeIcon /><SearchCaret />业务流程管理</SearchBox>
      <SearchButton>搜索一下</SearchButton>
      <TaskSeparator />
      <TaskItem $open><FolderIcon /></TaskItem>
      <TaskItem><ExcelIcon /></TaskItem>
      <TaskItem><WordIcon /></TaskItem>
      <TaskItem><EdgeIcon /></TaskItem>
      <TaskItem $open><SwirlIcon /></TaskItem>
      <TaskItem $open $active><Logo s={30} /></TaskItem>
      <TaskItem $open><DarkApp /></TaskItem>
      <Tray>
        <TrayItem $w={34}><HelpIcon /></TrayItem>
        <TrayItem $w={32}><TrayUp /></TrayItem>
        <TrayItem $w={30}><WifiIcon /></TrayItem>
        <TrayItem $w={30}><GameIcon /></TrayItem>
        <TrayItem $w={29}><QqIcon /></TrayItem>
        <TrayItem $w={31}><BatteryIcon /></TrayItem>
        <TrayItem $w={29}><VolumeIcon /></TrayItem>
        <TrayItem $w={32}><ImeLang>英</ImeLang></TrayItem>
        <TrayItem $w={38}><ImeMode>拼</ImeMode></TrayItem>
        <TrayItem $w={104}><Clock>0:58 周六<br />2022/12/3</Clock></TrayItem>
        <TrayItem $w={56}><NoticeIcon /><NoticeBadge>1</NoticeBadge></TrayItem>
      </Tray>
    </TaskBar>
  </Page>
);

export default App;
